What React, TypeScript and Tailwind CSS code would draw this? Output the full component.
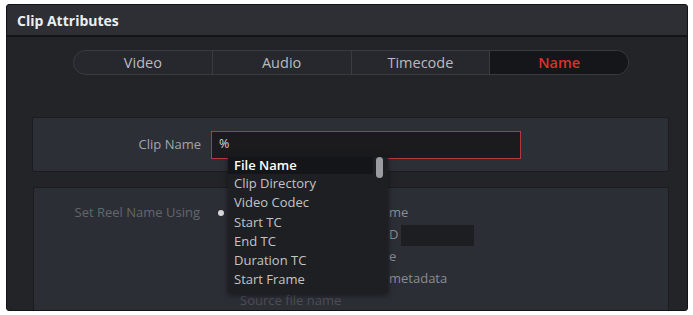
import React from 'react';

const font = { fontFamily: '"Open Sans", "Liberation Sans", sans-serif' };

const tabs = ['Video', 'Audio', 'Timecode', 'Name'];

const menuItems = [
  'File Name',
  'Clip Directory',
  'Video Codec',
  'Start TC',
  'End TC',
  'Duration TC',
  'Start Frame',
];

// what is left visible of the reel options to the right of the open menu
function ReelRow({ tail, selected, field }: { tail: string; selected?: boolean; field?: boolean }) {
  return (
    <div className="flex h-[22px] items-center">
      <span className="flex w-[12px] justify-center">
        {selected && <span className="h-[6px] w-[6px] rounded-full bg-[#d8d9dc]" />}
      </span>
      <span className="ml-[162px] text-[13px] text-[#8a8c93]">{tail}</span>
      {field && <span className="ml-[3px] h-[21px] w-[73px] bg-[#1d1e22]" />}
    </div>
  );
}

export default function App() {
  return (
    <div className="h-[315px] w-[693px] bg-white pb-[4px] pl-[6px] pr-[5px] pt-[4px]" style={font}>
      <div className="relative flex h-full flex-col overflow-hidden rounded-[3px] border border-[#131315] bg-[#232428]">
        {/* title bar */}
        <div className="flex h-[32px] shrink-0 items-center border-b-2 border-[#141416] bg-[#2e2f34] px-[10px]">
          <span className="text-[14px] font-bold text-[#eceef0]">Clip Attributes</span>
        </div>

        {/* tabs */}
        <div className="ml-[66px] mt-[13px] flex h-[25px] w-[556px] shrink-0 overflow-hidden rounded-full border border-[#3a3b41] bg-[#27282d]">
          {tabs.map((t, i) => (
            <div
              key={t}
              className={`flex flex-1 items-center justify-center text-[14.5px] ${
                i > 0 ? 'border-l border-[#3a3b41]' : ''
              } ${t === 'Name' ? 'bg-[#151619] font-semibold text-[#dc302b]' : 'text-[#b9bbc0]'}`}
            >
              {t}
            </div>
          ))}
        </div>

        {/* clip name panel */}
        <div className="ml-[25px] mt-[42px] flex h-[55px] w-[637px] shrink-0 items-center rounded-[2px] border border-[#1b1c20] bg-[#2d2f37]">
          <span className="w-[168px] text-right text-[13px] text-[#a3a5ab]">Clip Name</span>
          <div className="ml-[10px] flex h-[28px] w-[310px] items-center border border-[#b3393b] bg-[#1b1b1e] px-[7px]">
            <span className="text-[12.5px] text-[#d6d7da]">%</span>
          </div>
        </div>

        {/* reel name panel */}
        <div className="ml-[26px] mt-[15px] flex w-[636px] flex-1 rounded-[2px] border border-[#1b1c20] bg-[#2c2e36] pt-[14px]">
          <span className="flex h-[22px] w-[166px] items-center justify-end text-[13px] text-[#64666d]">
            Set Reel Name Using
          </span>
          <div className="ml-[15px] flex flex-col">
            <ReelRow tail="me" selected />
            <ReelRow tail="D" field />
            <ReelRow tail="e" />
            <ReelRow tail="metadata" />
            <div className="flex h-[22px] items-center pl-[25px] text-[13px] text-[#4d4f57]">Source file name</div>
          </div>
        </div>

        {/* dropdown menu */}
        <div className="absolute left-[221px] top-[152px] w-[160px] bg-[#1e1f22] pb-[3px] shadow-[0_2px_6px_rgba(0,0,0,0.5)]">
          <div className="absolute right-[5px] top-0 h-[21px] w-[7px] rounded-full bg-[#9a9ca1]" />
          {menuItems.map((m, i) => (
            <div
              key={m}
              className={`flex w-[145px] items-center pl-[6px] text-[13px] ${
                i === 0 ? 'h-[17px] bg-[#141518] font-semibold text-white' : 'h-[19.3px] text-[#c3c4c8]'
              }`}
            >
              {m}
            </div>
          ))}
        </div>
      </div>
    </div>
  );
}
